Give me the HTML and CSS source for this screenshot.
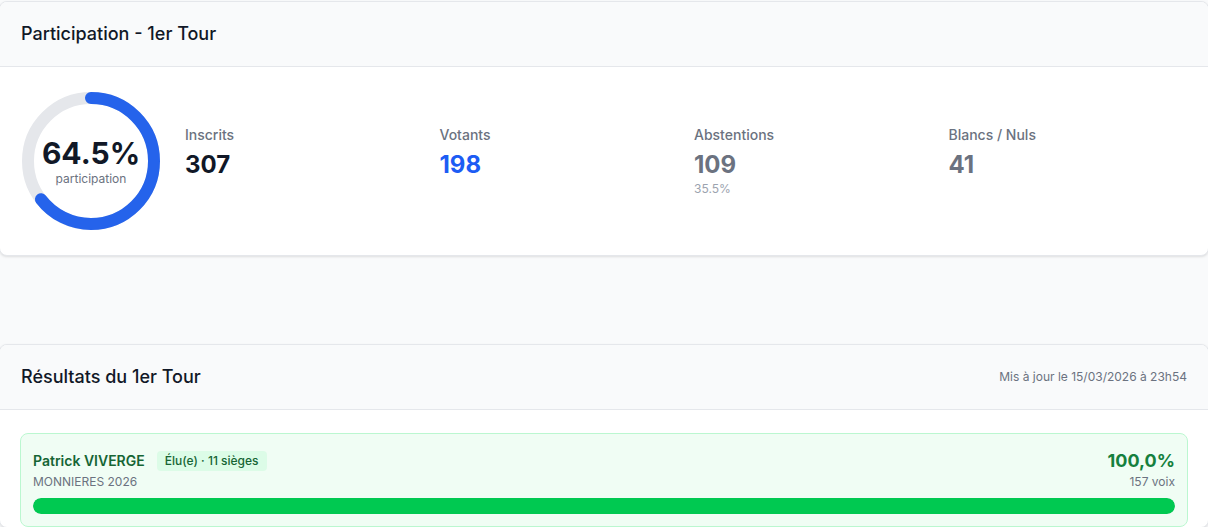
FILE: index.html
```html
<!DOCTYPE html>
<html lang="fr">
<head>
<meta charset="utf-8">
<title>Résultats</title>
<link rel="stylesheet" href="styles.css">
</head>
<body>
<main class="page">
  <section class="card participation">
    <header class="card-header">
      <h2 class="card-title">Participation - 1er Tour</h2>
    </header>
    <div class="card-body part-body">
      <div class="donut">
        <svg width="140" height="140" viewBox="0 0 140 140">
          <circle cx="70" cy="70" r="63" fill="none" stroke="#e5e7eb" stroke-width="12"/>
          <circle cx="70" cy="70" r="63" fill="none" stroke="#2563eb" stroke-width="12" stroke-linecap="round" stroke-dasharray="255.32 395.84" transform="rotate(-90 70 70)"/>
        </svg>
        <div class="donut-label">
          <div class="donut-value">64.5%</div>
          <div class="donut-caption">participation</div>
        </div>
      </div>
      <div class="stats">
        <div class="stat">
          <div class="stat-label">Inscrits</div>
          <div class="stat-value">307</div>
        </div>
        <div class="stat">
          <div class="stat-label">Votants</div>
          <div class="stat-value blue">198</div>
        </div>
        <div class="stat">
          <div class="stat-label">Abstentions</div>
          <div class="stat-value gray">109</div>
          <div class="stat-sub">35.5%</div>
        </div>
        <div class="stat">
          <div class="stat-label">Blancs / Nuls</div>
          <div class="stat-value gray">41</div>
        </div>
      </div>
    </div>
  </section>

  <section class="card results">
    <header class="card-header split">
      <h2 class="card-title">Résultats du 1er Tour</h2>
      <span class="updated">Mis à jour le 15/03/2026 à 23h54</span>
    </header>
    <div class="card-body results-body">
      <div class="candidate">
        <div class="cand-top">
          <div class="cand-info">
            <div class="cand-name-row">
              <span class="cand-name">Patrick VIVERGE</span>
              <span class="badge">Élu(e) · 11 sièges</span>
            </div>
            <div class="cand-list">MONNIERES 2026</div>
          </div>
          <div class="cand-score">
            <div class="cand-pct">100,0%</div>
            <div class="cand-votes">157 voix</div>
          </div>
        </div>
        <div class="bar"><div class="bar-fill" style="width:100%"></div></div>
      </div>
    </div>
  </section>
</main>
</body>
</html>
```

FILE: styles.css
```css
* { box-sizing: border-box; }
html, body { margin: 0; padding: 0; }
body {
  background: #f9fafb;
  font-family: Inter, "Noto Sans", "Liberation Sans", sans-serif;
  color: #111827;
  overflow: hidden;
}
.page { padding-top: 1px; }
.card {
  background: #fff;
  border: 1px solid #e5e7eb;
  border-radius: 8px;
  box-shadow: 0 1px 3px rgba(0,0,0,0.08), 0 1px 2px rgba(0,0,0,0.04);
  overflow: hidden;
  margin: 0 -1px;
}
.results { margin-top: 88px; }
.card-header {
  background: #f9fafb;
  border-bottom: 1px solid #e5e7eb;
  padding: 20px 21px;
}
.card-header.split {
  display: flex;
  justify-content: space-between;
  align-items: center;
}
.card-title {
  margin: 0;
  font-size: 18px;
  line-height: 24px;
  font-weight: 500;
  color: #111827;
}
.updated {
  font-size: 12px;
  line-height: 16px;
  color: #6b7280;
}
.part-body {
  display: flex;
  align-items: center;
  gap: 24px;
  padding: 24px 21px;
}
.donut {
  position: relative;
  width: 140px;
  height: 140px;
  flex: none;
}
.donut svg { display: block; }
.donut-label {
  position: absolute;
  inset: 0;
  display: flex;
  flex-direction: column;
  align-items: center;
  justify-content: center;
}
.donut-value {
  font-size: 30px;
  line-height: 36px;
  font-weight: 700;
  color: #111827;
}
.donut-caption {
  font-size: 12px;
  line-height: 16px;
  color: #6b7280;
}
.stats {
  flex: 1;
  display: grid;
  grid-template-columns: repeat(4, 1fr);
  gap: 16px;
  align-self: flex-start;
  margin-top: 34px;
}
.stat-label {
  font-size: 14px;
  line-height: 20px;
  font-weight: 500;
  color: #6b7280;
}
.stat-value {
  margin-top: 4px;
  font-size: 24px;
  line-height: 32px;
  font-weight: 700;
  color: #111827;
}
.stat-value.blue { color: #1c5cf4; }
.stat-value.gray { color: #6b7280; }
.stat-sub {
  font-size: 12px;
  line-height: 16px;
  color: #9ca3af;
}
.results-body { padding: 23px 20px 0; }
.candidate {
  background: #f0fdf4;
  border: 1px solid #bbf7d0;
  border-radius: 8px;
  padding: 16px 12px 12px;
}
.cand-top {
  display: flex;
  justify-content: space-between;
  align-items: flex-start;
}
.cand-name-row {
  display: flex;
  align-items: center;
  gap: 12px;
  height: 20px;
  margin-top: 1px;
}
.cand-name {
  font-size: 14px;
  line-height: 20px;
  font-weight: 600;
  color: #166534;
}
.badge {
  background: #dcfce7;
  color: #166534;
  font-size: 12px;
  line-height: 16px;
  font-weight: 500;
  padding: 2px 8px;
  border-radius: 4px;
}
.cand-list {
  margin-top: 3px;
  font-size: 12px;
  line-height: 16px;
  color: #6b7280;
}
.cand-score { text-align: right; }
.cand-pct {
  margin-top: 1px;
  font-size: 18px;
  line-height: 20px;
  font-weight: 700;
  color: #15803d;
}
.cand-votes {
  margin-top: 3px;
  font-size: 12px;
  line-height: 16px;
  color: #6b7280;
}
.bar {
  margin-top: 8px;
  height: 16px;
  background: #e5e7eb;
  border-radius: 9999px;
  overflow: hidden;
}
.bar-fill {
  height: 100%;
  background: #00c951;
  border-radius: 9999px;
}
```
